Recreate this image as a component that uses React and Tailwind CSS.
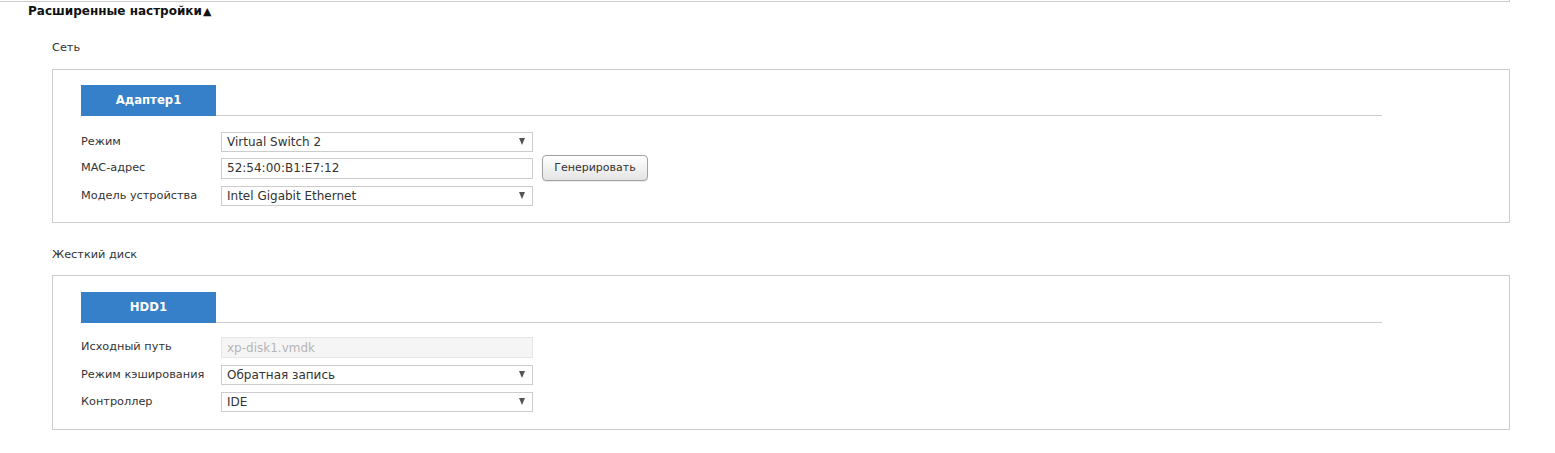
import React from 'react'

const font = { fontFamily: '"DejaVu Sans", Verdana, sans-serif' }

function Select({ value }) {
  return (
    <div className="relative flex h-[20px] w-[312px] items-center border border-[#cccccc] bg-white pl-[5px] text-[12px] text-[#333]">
      {value}
      <span className="absolute right-[7px] top-[5px] h-0 w-0 border-x-[3.5px] border-t-[7px] border-x-transparent border-t-[#555]" />
    </div>
  )
}

function Input({ value, disabled }) {
  return (
    <div
      className={`flex h-[21px] w-[312px] items-center border pl-[5px] text-[12px] ${
        disabled ? 'border-[#e6e6e6] bg-[#f5f5f5] text-[#b5b5b5]' : 'border-[#cccccc] bg-white text-[#333]'
      }`}
    >
      {value}
    </div>
  )
}

function Row({ label, children, className = '' }) {
  return (
    <div className={`flex items-center ${className}`}>
      <div className="w-[140px] text-[11.3px] text-[#333]">{label}</div>
      {children}
    </div>
  )
}

function Panel({ tab, children, className = '' }) {
  return (
    <div className={`border border-[#cccccc] pl-[28px] pr-[127px] ${className}`}>
      <div className="flex h-[31px]">
        <div className="flex w-[135px] items-center justify-center bg-[#3580c8] text-[11.7px] font-bold text-white">
          {tab}
        </div>
        <div className="flex-1 border-b border-[#cccccc]" />
      </div>
      {children}
    </div>
  )
}

export default function App() {
  return (
    <div className="h-[453px] w-[1555px] overflow-hidden bg-white" style={font}>
      <div className="h-[2px] w-[1510px] border-b border-r border-[#cccccc]" />
      <div className="mt-[1px] flex h-[16px] items-center pl-[28px] text-[12px] font-bold text-[#111]">
        Расширенные настройки<span className="ml-[1px] text-[11px] leading-none">▲</span>
      </div>

      <div className="w-[1510px] pl-[52px]">
        <div className="mt-[21px] text-[11.3px] leading-[16px] text-[#333]">Сеть</div>
        <Panel tab="Адаптер1" className="mt-[13px] pb-[16px] pt-[15px]">
          <div className="mt-[16px]">
            <Row label="Режим">
              <Select value="Virtual Switch 2" />
            </Row>
            <Row label="MAC-адрес" className="mt-[3px] h-[26px]">
              <Input value="52:54:00:B1:E7:12" />
              <button className="ml-[9px] h-[26px] w-[106px] rounded-[4px] border border-[#a0a0a0] bg-gradient-to-b from-white to-[#e4e4e4] text-[11px] text-[#333] shadow-[0_1px_1px_rgba(0,0,0,0.08)]">
                Генерировать
              </button>
            </Row>
            <Row label="Модель устройства" className="mt-[5px]">
              <Select value="Intel Gigabit Ethernet" />
            </Row>
          </div>
        </Panel>

        <div className="mt-[24px] text-[11.3px] leading-[16px] text-[#333]">Жесткий диск</div>
        <Panel tab="HDD1" className="mt-[12px] pb-[17px] pt-[16px]">
          <div className="mt-[14px]">
            <Row label="Исходный путь">
              <Input value="xp-disk1.vmdk" disabled />
            </Row>
            <Row label="Режим кэширования" className="mt-[7px]">
              <Select value="Обратная запись" />
            </Row>
            <Row label="Контроллер" className="mt-[7px]">
              <Select value="IDE" />
            </Row>
          </div>
        </Panel>
      </div>
    </div>
  )
}
